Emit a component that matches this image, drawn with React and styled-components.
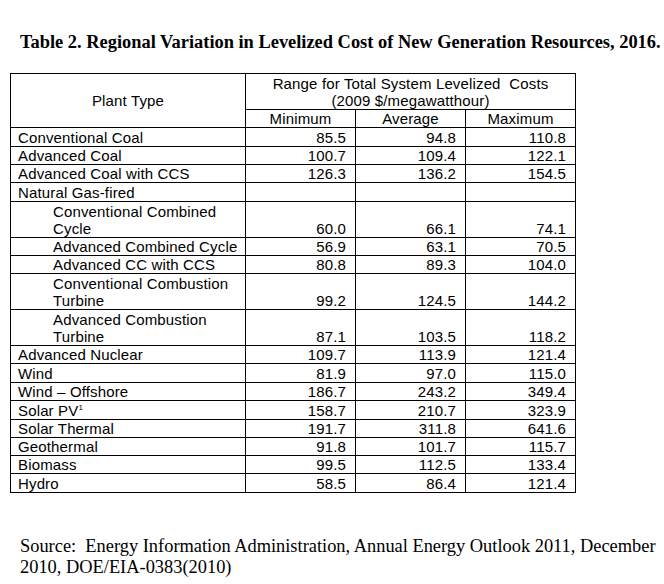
import styled, { createGlobalStyle } from "styled-components";

const GlobalStyle = createGlobalStyle`
  body {
    margin: 0;
    background: #fff;
    color: #000;
  }
`;

const Page = styled.div`
  width: 664px;
  height: 584px;
  padding: 32px 0 0 10px;
  box-sizing: border-box;
  overflow: hidden;
`;

const Title = styled.h1`
  margin: 0 0 20px 10px;
  font-family: "Liberation Serif", serif;
  font-weight: bold;
  font-size: 18.4px;
  line-height: 21px;
  white-space: nowrap;
`;

const Table = styled.table`
  border-collapse: collapse;
  table-layout: fixed;
  width: 566px;
  font-family: "Liberation Sans", Arial, sans-serif;
  font-size: 15px;
  letter-spacing: 0.15px;
  line-height: 17px;
`;

const Row = styled.tr`
  height: ${(p) => p.h}px;
`;

const Cell = styled.td`
  border: 1px solid #000;
  padding: 0 6px 0 ${(p) => (p.indent ? 42 : 7)}px;
  vertical-align: bottom;
  text-align: left;
  white-space: nowrap;
  overflow: visible;
`;

const Num = styled.td`
  border: 1px solid #000;
  padding: 0 9px 0 0;
  vertical-align: bottom;
  text-align: right;
`;

const Head = styled.th`
  border: 1px solid #000;
  padding: 0;
  font-weight: normal;
  text-align: center;
  vertical-align: middle;
  white-space: nowrap;
`;

const Sup = styled.sup`
  font-size: 8px;
  line-height: 0;
  vertical-align: 6px;
`;

const Source = styled.p`
  margin: 43px 0 0 10px;
  font-family: "Liberation Serif", serif;
  font-size: 18.4px;
  line-height: 21.3px;
  white-space: nowrap;
`;

const rows = [
  { name: "Conventional Coal", v: ["85.5", "94.8", "110.8"], h: 19 },
  { name: "Advanced Coal", v: ["100.7", "109.4", "122.1"], h: 18 },
  { name: "Advanced Coal with CCS", v: ["126.3", "136.2", "154.5"], h: 18 },
  { name: "Natural Gas-fired", v: ["", "", ""], h: 19 },
  { name: ["Conventional Combined", "Cycle"], v: ["60.0", "66.1", "74.1"], h: 36, indent: true },
  { name: "Advanced Combined Cycle", v: ["56.9", "63.1", "70.5"], h: 18, indent: true },
  { name: "Advanced CC with CCS", v: ["80.8", "89.3", "104.0"], h: 18, indent: true },
  { name: ["Conventional Combustion", "Turbine"], v: ["99.2", "124.5", "144.2"], h: 36, indent: true },
  { name: ["Advanced Combustion", "Turbine"], v: ["87.1", "103.5", "118.2"], h: 36, indent: true },
  { name: "Advanced Nuclear", v: ["109.7", "113.9", "121.4"], h: 18 },
  { name: "Wind", v: ["81.9", "97.0", "115.0"], h: 19 },
  { name: "Wind – Offshore", v: ["186.7", "243.2", "349.4"], h: 18 },
  { name: "Solar PV", sup: "1", v: ["158.7", "210.7", "323.9"], h: 19 },
  { name: "Solar Thermal", v: ["191.7", "311.8", "641.6"], h: 18 },
  { name: "Geothermal", v: ["91.8", "101.7", "115.7"], h: 18 },
  { name: "Biomass", v: ["99.5", "112.5", "133.4"], h: 18 },
  { name: "Hydro", v: ["58.5", "86.4", "121.4"], h: 19 },
];

function App() {
  return (
    <Page>
      <GlobalStyle />
      <Title>
        Table 2. Regional Variation in Levelized Cost of New Generation Resources, 2016.
      </Title>
      <Table>
        <colgroup>
          <col style={{ width: 235 }} />
          <col style={{ width: 110 }} />
          <col style={{ width: 110 }} />
          <col style={{ width: 110 }} />
        </colgroup>
        <thead>
          <Row h={36}>
            <Head rowSpan={2}>Plant Type</Head>
            <Head colSpan={3}>
              Range for Total System Levelized&nbsp; Costs
              <br />
              (2009 $/megawatthour)
            </Head>
          </Row>
          <Row h={18}>
            <Head>Minimum</Head>
            <Head>Average</Head>
            <Head>Maximum</Head>
          </Row>
        </thead>
        <tbody>
          {rows.map((r, i) => (
            <Row key={i} h={r.h}>
              <Cell indent={r.indent}>
                {Array.isArray(r.name) ? (
                  <>
                    {r.name[0]}
                    <br />
                    {r.name[1]}
                  </>
                ) : (
                  r.name
                )}
                {r.sup && <Sup>{r.sup}</Sup>}
              </Cell>
              {r.v.map((x, j) => (
                <Num key={j}>{x}</Num>
              ))}
            </Row>
          ))}
        </tbody>
      </Table>
      <Source>
        Source:&nbsp; Energy Information Administration, Annual Energy Outlook 2011, December
        <br />
        2010, DOE/EIA-0383(2010)
      </Source>
    </Page>
  );
}

export default App;
